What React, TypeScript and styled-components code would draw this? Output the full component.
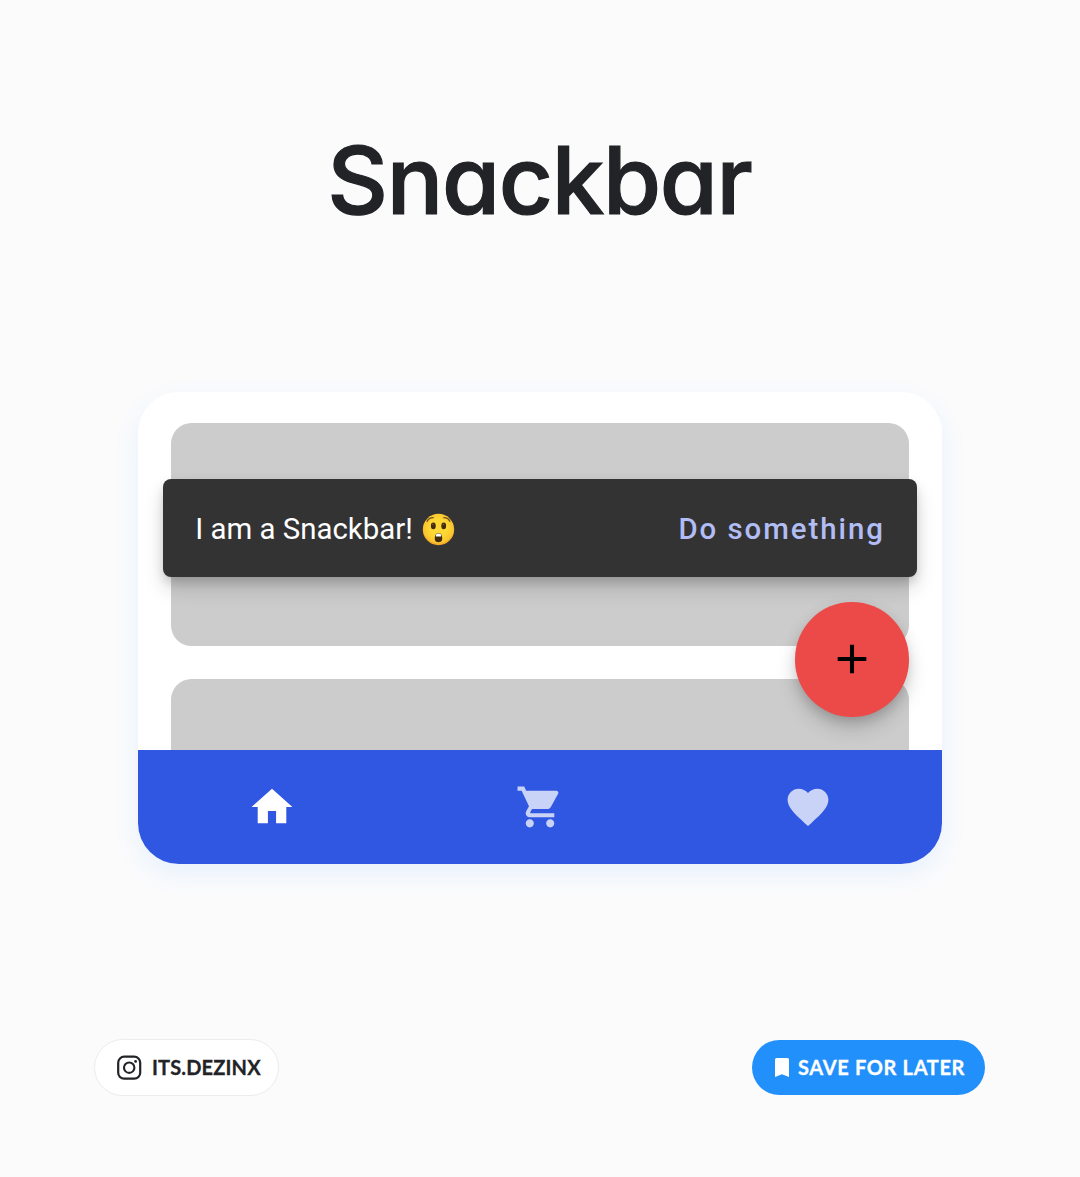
import React from "react";
import styled, { createGlobalStyle } from "styled-components";
import { MdHome, MdShoppingCart, MdFavorite, MdAdd } from "react-icons/md";

const GlobalStyle = createGlobalStyle`
  *, *::before, *::after { box-sizing: border-box; }
  body { margin: 0; background: #fbfbfc; }
  button { border: 0; padding: 0; background: none; font: inherit; }
`;

const Page = styled.main`
  width: 1080px;
  height: 1177px;
  padding: 120px 95px 81px 94px;
  display: flex;
  flex-direction: column;
  align-items: center;
  background: #fbfbfc;
  font-family: Inter, "Liberation Sans", sans-serif;
`;

const Title = styled.h1`
  margin: 0 0 152px;
  height: 120px;
  line-height: 121px;
  font-size: 94px;
  font-weight: 500;
  letter-spacing: -1.3px;
  -webkit-text-stroke: 1.2px #222327;
  font-feature-settings: "cv11" 1;
  color: #222327;
  white-space: nowrap;
`;

const Device = styled.section`
  position: relative;
  flex: none;
  width: 804px;
  height: 472px;
  display: flex;
  flex-direction: column;
  border-radius: 41px;
  overflow: hidden;
  background: #fff;
`;

const DeviceShadow = styled.div`
  margin-left: 1px;
  border-radius: 41px;
  box-shadow: 0 10px 26px rgba(33, 145, 251, 0.09);
`;

const Feed = styled.div`
  flex: 1;
  min-height: 0;
  padding: 30.5px 32.7px 0;
  display: flex;
  flex-direction: column;
  gap: 33px;
  overflow: hidden;
`;

const Placeholder = styled.div`
  flex: none;
  height: 223.3px;
  border-radius: 20.5px;
  background: #ccc;
`;

const Snackbar = styled.div`
  position: absolute;
  left: 24.7px;
  right: 24.7px;
  top: 87px;
  height: 98.2px;
  padding: 0 32.5px;
  display: flex;
  align-items: center;
  justify-content: space-between;
  border-radius: 8px;
  background: #333;
  font-family: Roboto, "Liberation Sans", sans-serif;
  font-size: 29.4px;
  box-shadow: 0 6px 10px -2px rgba(0, 0, 0, 0.12), 0 12px 20px rgba(0, 0, 0, 0.14),
    0 4px 14px rgba(0, 0, 0, 0.06);
`;

const Message = styled.div`
  display: flex;
  align-items: center;
  gap: 9px;
  line-height: 40px;
  padding-top: 2.4px;
  color: #fff;
  white-space: nowrap;
`;

const Action = styled.button`
  padding-top: 2.4px;
  line-height: 40px;
  font-weight: 500;
  letter-spacing: 1.95px;
  color: #b1bdf4;
  white-space: nowrap;
`;

const Fab = styled.button`
  position: absolute;
  right: 32.7px;
  top: 210px;
  width: 114.5px;
  height: 114.5px;
  display: grid;
  place-items: center;
  border-radius: 50%;
  background: #ec4a48;
  color: #000;
  box-shadow: 0 6px 10px -2px rgba(0, 0, 0, 0.12), 0 12px 20px rgba(0, 0, 0, 0.14),
    0 4px 18px rgba(0, 0, 0, 0.06);

  svg {
    padding: 0.5px;
  }
`;

const Nav = styled.nav`
  flex: none;
  height: 114.5px;
  display: grid;
  grid-template-columns: repeat(3, 1fr);
  background: #2f57e1;
`;

const NavItem = styled.button<{ $active?: boolean }>`
  display: grid;
  place-items: center;
  color: ${(p) => (p.$active ? "#fff" : "#c9d3f8")};

  svg {
    padding: 0.5px;
  }
`;

const Footer = styled.footer`
  width: 100%;
  margin-top: auto;
  display: flex;
  justify-content: space-between;
  align-items: center;
`;

const Pill = styled.div<{ $filled?: boolean }>`
  height: ${(p) => (p.$filled ? 55 : 57)}px;
  width: ${(p) => (p.$filled ? 233 : 185)}px;
  padding-left: ${(p) => (p.$filled ? 23 : 22)}px;
  display: flex;
  align-items: center;
  gap: ${(p) => (p.$filled ? 9 : 10)}px;
  border-radius: 29px;
  border: ${(p) => (p.$filled ? "0" : "1px solid #ececee")};
  background: ${(p) => (p.$filled ? "#2190fb" : "#fff")};
  color: ${(p) => (p.$filled ? "#fff" : "#222327")};
`;

const PillText = styled.span<{ $spacing: number }>`
  font-family: Lato, "Liberation Sans", sans-serif;
  font-size: 20px;
  line-height: 24px;
  padding-bottom: 1px;
  font-weight: 700;
  letter-spacing: ${(p) => p.$spacing}px;
  -webkit-text-stroke: 0.3px currentColor;
  white-space: nowrap;
`;

const Astonished = () => (
  <svg width="33" height="33" viewBox="0 0 33 33" role="img" aria-label="astonished face">
    <defs>
      <radialGradient id="face" cx="50%" cy="45%" r="52%">
        <stop offset="0.5" stopColor="#fdd835" />
        <stop offset="0.9" stopColor="#fbc52d" />
        <stop offset="1" stopColor="#f3a927" />
      </radialGradient>
    </defs>
    <circle cx="16.5" cy="16.5" r="15.7" fill="url(#face)" />
    <path d="M5.2 8.3C6.3 5.8 8.4 4.6 11.2 4.6M21.8 4.6C24.6 4.6 26.7 5.8 27.8 8.3" fill="none" stroke="#6b4d22" strokeWidth="1.4" strokeLinecap="round" />
    <ellipse cx="11.3" cy="12.9" rx="2.4" ry="3.3" fill="#422b0d" />
    <ellipse cx="21.7" cy="12.9" rx="2.4" ry="3.3" fill="#422b0d" />
    <circle cx="10.8" cy="11.5" r="0.8" fill="#896024" />
    <circle cx="21.2" cy="11.5" r="0.8" fill="#896024" />
    <path d="M16.5 20C19.4 20 20.2 23 20.2 25.8C20.2 28.4 18.6 29.2 16.5 29.2S12.8 28.4 12.8 25.8C12.8 23 13.6 20 16.5 20Z" fill="#422b0d" />
    <path d="M13.9 21.7C15 20.2 18 20.2 19.1 21.7V23.5H13.9Z" fill="#fff" />
  </svg>
);

const CameraLogo = () => (
  <svg width="25" height="25" viewBox="0 0 25 25" fill="none" stroke="currentColor" aria-hidden="true">
    <rect x="1.2" y="1.7" width="22" height="22" rx="6" strokeWidth="2.2" />
    <circle cx="12.2" cy="12.7" r="5.2" strokeWidth="2.1" />
    <circle cx="18.6" cy="6.4" r="1.4" fill="currentColor" stroke="none" />
  </svg>
);

const Bookmark = () => (
  <svg width="14" height="19" viewBox="0 0 14 19" fill="currentColor" aria-hidden="true">
    <path d="M1.5 0H12.5Q14 0 14 1.5V19L7 16.2L0 19V1.5Q0 0 1.5 0Z" />
  </svg>
);

export default function App() {
  return (
    <>
      <GlobalStyle />
      <Page>
        <Title>Snackbar</Title>
        <DeviceShadow>
          <Device>
            <Feed>
              <Placeholder />
              <Placeholder />
            </Feed>
            <Nav>
              <NavItem $active aria-label="Home"><MdHome size={50} /></NavItem>
              <NavItem aria-label="Cart"><MdShoppingCart size={50} /></NavItem>
              <NavItem aria-label="Favourites"><MdFavorite size={50} /></NavItem>
            </Nav>
            <Snackbar>
              <Message>I am a Snackbar! <Astonished /></Message>
              <Action>Do something</Action>
            </Snackbar>
            <Fab aria-label="Add"><MdAdd size={50} /></Fab>
          </Device>
        </DeviceShadow>
        <Footer>
          <Pill>
            <CameraLogo />
            <PillText $spacing={0.15}>ITS.DEZINX</PillText>
          </Pill>
          <Pill $filled>
            <Bookmark />
            <PillText $spacing={0.65}>SAVE FOR LATER</PillText>
          </Pill>
        </Footer>
      </Page>
    </>
  );
}
